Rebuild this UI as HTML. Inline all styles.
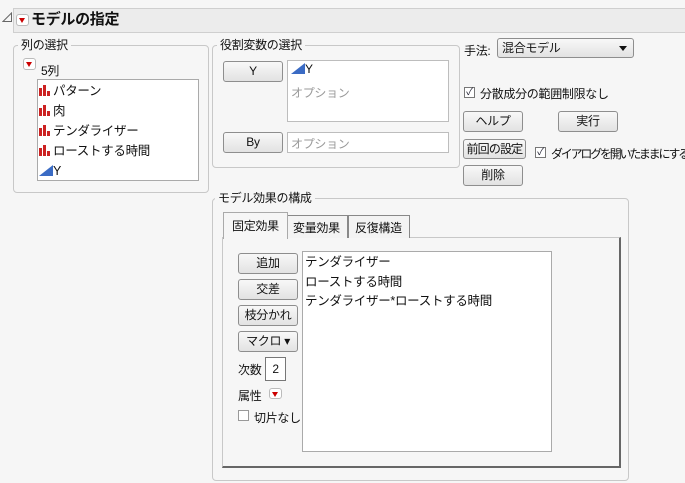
<!DOCTYPE html>
<html><head><meta charset="utf-8"><style>
*{box-sizing:border-box;margin:0;padding:0}
body{width:685px;height:483px;background:#f6f6f6;font-family:"Liberation Sans","Noto Sans CJK JP",sans-serif;font-size:12px;color:#111;position:relative;overflow:hidden;letter-spacing:-0.3px}
.a{position:absolute;white-space:nowrap}
.panel{position:absolute;border:1px solid #c8c8c8;border-radius:4px}
.lbl{position:absolute;background:#f6f6f6;padding:0 3px;line-height:14px}
.btn{position:absolute;border:1px solid #8e8e8e;border-radius:3px;background:linear-gradient(#f8f8f8,#e2e2e2);text-align:center;line-height:18px;font-size:12px}
.box{position:absolute;background:#fff;border:1px solid #bdbdbd}
.red{position:absolute;width:13px;height:12px;border:1px solid #bbb;border-radius:3px;background:#fff}
.red:after{content:"";position:absolute;left:2px;top:3px;border-left:3.5px solid transparent;border-right:3.5px solid transparent;border-top:5px solid #c00}
.cb{position:absolute;width:11px;height:11px;border:1px solid #777;background:#fff;font-size:10px;line-height:9px;text-align:center;color:#223}
.bar{display:inline-block;vertical-align:-1px;width:13px;height:11px;position:relative;margin-right:1px}
.bar i{position:absolute;bottom:0;background:#c22;width:3px}
.tri{display:inline-block;width:0;height:0;border-left:14px solid transparent;border-bottom:11px solid #3a6bc4;vertical-align:-1px}
</style></head><body>
<svg class="a" style="left:2px;top:12px" width="11" height="11"><path d="M9.5 1 L9.5 9.5 L1 9.5 Z" fill="none" stroke="#666"/></svg>
<div class="a" style="left:13px;top:8px;width:672px;height:25px;background:#ececec;border:1px solid #cfcfcf;border-right:none"></div>
<div class="red" style="left:16px;top:14px"></div>
<div class="a" style="left:31px;top:9px;font-size:15px;font-weight:bold;line-height:22px">モデルの指定</div>

<div class="panel" style="left:13px;top:45px;width:196px;height:148px"></div>
<div class="lbl" style="left:18px;top:38px">列の選択</div>
<div class="red" style="left:23px;top:58px"></div>
<div class="a" style="left:41px;top:62px">5列</div>
<div class="box" style="left:37px;top:79px;width:162px;height:102px;border-color:#aaa"></div>
<div class="a" style="left:39px;top:81px;line-height:20px;font-size:12.5px">
<div><span class="bar"><i style="left:0;height:8px"></i><i style="left:4px;height:11px"></i><i style="left:8px;height:5px"></i></span>パターン</div>
<div><span class="bar"><i style="left:0;height:8px"></i><i style="left:4px;height:11px"></i><i style="left:8px;height:5px"></i></span>肉</div>
<div><span class="bar"><i style="left:0;height:8px"></i><i style="left:4px;height:11px"></i><i style="left:8px;height:5px"></i></span>テンダライザー</div>
<div><span class="bar"><i style="left:0;height:8px"></i><i style="left:4px;height:11px"></i><i style="left:8px;height:5px"></i></span>ローストする時間</div>
<div><span class="tri"></span>Y</div></div>

<div class="panel" style="left:212px;top:45px;width:248px;height:123px"></div>
<div class="lbl" style="left:217px;top:38px">役割変数の選択</div>
<div class="btn" style="left:223px;top:61px;width:60px;height:21px">Y</div>
<div class="box" style="left:287px;top:60px;width:162px;height:62px"></div>
<div class="a" style="left:291px;top:62px"><span class="tri"></span>Y</div>
<div class="a" style="left:291px;top:84px;color:#999">オプション</div>
<div class="btn" style="left:223px;top:132px;width:60px;height:21px">By</div>
<div class="box" style="left:287px;top:132px;width:162px;height:21px"></div>
<div class="a" style="left:291px;top:135px;color:#999">オプション</div>

<div class="a" style="left:464px;top:42px">手法:</div>
<div class="btn" style="left:497px;top:38px;width:137px;height:20px;text-align:left;padding-left:4px">混合モデル<span style="position:absolute;right:6px;top:7px;border-left:4px solid transparent;border-right:4px solid transparent;border-top:5px solid #111"></span></div>
<div class="cb" style="left:464px;top:87px">✓</div>
<div class="a" style="left:480px;top:85px">分散成分の範囲制限なし</div>
<div class="btn" style="left:463px;top:111px;width:60px;height:21px">ヘルプ</div>
<div class="btn" style="left:558px;top:111px;width:60px;height:21px">実行</div>
<div class="btn" style="left:463px;top:139px;width:63px;height:20px;letter-spacing:-0.8px">前回の設定</div>
<div class="cb" style="left:535px;top:147px">✓</div>
<div class="a" style="left:551px;top:145px;letter-spacing:-2.2px">ダイアログを開いたままにする</div>
<div class="btn" style="left:463px;top:165px;width:60px;height:21px">削除</div>

<div class="panel" style="left:212px;top:198px;width:417px;height:283px"></div>
<div class="lbl" style="left:215px;top:191px">モデル効果の構成</div>
<div class="a" style="left:222px;top:237px;width:399px;height:231px;border:1px solid #c8c8c8;border-right:2px solid #666;border-bottom:2px solid #666;background:#f6f6f6"></div>
<div class="a" style="left:223px;top:212px;width:65px;height:27px;border:1px solid #aaa;border-bottom:none;background:#f6f6f6;padding:4px 0 0 8px">固定効果</div>
<div class="a" style="left:288px;top:215px;width:60px;height:23px;border:1px solid #888;border-left:none;border-bottom:none;background:#f3f3f3;padding:3px 0 0 5px">変量効果</div>
<div class="a" style="left:348px;top:215px;width:62px;height:23px;border:1px solid #888;border-bottom:none;background:#f3f3f3;padding:3px 0 0 6px">反復構造</div>
<div class="btn" style="left:238px;top:253px;width:60px;height:21px">追加</div>
<div class="btn" style="left:238px;top:279px;width:60px;height:21px">交差</div>
<div class="btn" style="left:238px;top:305px;width:60px;height:21px">枝分かれ</div>
<div class="btn" style="left:238px;top:331px;width:60px;height:21px">マクロ ▾</div>
<div class="a" style="left:238px;top:361px">次数</div>
<div class="box" style="left:265px;top:357px;width:21px;height:24px;border-color:#777;text-align:center;line-height:22px">2</div>
<div class="a" style="left:238px;top:387px">属性</div>
<div class="red" style="left:269px;top:388px;width:13px;height:11px"></div>
<div class="cb" style="left:238px;top:410px;border-color:#999"></div>
<div class="a" style="left:254px;top:409px">切片なし</div>
<div class="box" style="left:302px;top:251px;width:250px;height:201px;border-color:#aaa"></div>
<div class="a" style="left:305px;top:253px;line-height:19.5px;font-size:12.5px">テンダライザー<br>ローストする時間<br>テンダライザー*ローストする時間</div>
</body></html>
